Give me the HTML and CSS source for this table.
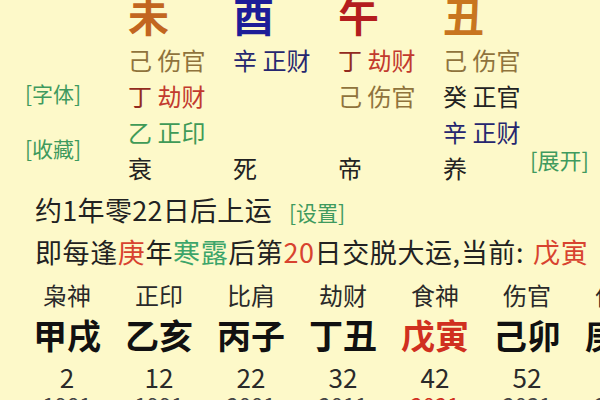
FILE: index.html
```html
<!DOCTYPE html>
<html lang="zh-CN">
<head>
<meta charset="utf-8">
<title>八字排盘</title>
<link rel="stylesheet" href="styles.css">
</head>
<body>
<main class="page">
  <section class="pillars">
    <div class="side">
      <span class="link">[字体]</span>
      <span class="link">[收藏]</span>
    </div>

    <div class="pillar">
      <div class="stem c-wei">未</div>
      <div class="hid"><span class="earth">己 伤官</span></div>
      <div class="hid"><span class="fire-d">丁</span> <span class="fire">劫财</span></div>
      <div class="hid"><span class="wood">乙 正印</span></div>
      <div class="hid stage">衰</div>
    </div>

    <div class="pillar">
      <div class="stem c-you">酉</div>
      <div class="hid"><span class="metal">辛 正财</span></div>
      <div class="hid"></div>
      <div class="hid"></div>
      <div class="hid stage">死</div>
    </div>

    <div class="pillar">
      <div class="stem c-wu">午</div>
      <div class="hid"><span class="fire-d">丁</span> <span class="fire">劫财</span></div>
      <div class="hid"><span class="earth">己 伤官</span></div>
      <div class="hid"></div>
      <div class="hid stage">帝</div>
    </div>

    <div class="pillar narrow">
      <div class="stem c-chou">丑</div>
      <div class="hid"><span class="earth">己 伤官</span></div>
      <div class="hid"><span class="water">癸 正官</span></div>
      <div class="hid"><span class="metal">辛 正财</span></div>
      <div class="hid stage">养</div>
    </div>

    <div class="expand"><span class="link">[展开]</span></div>
  </section>

  <p class="line first">约1年零22日后上运<span class="link small">[设置]</span></p>
  <p class="line second">即每逢<span class="hl-red">庚</span>年<span class="hl-green">寒露</span>后第<span class="hl-red">20</span>日交脱大运,当前:<span class="hl-red now">戊寅</span></p>

  <section class="dayun">
    <div class="dy"><span class="dy-god">枭神</span><span class="dy-gz">甲戌</span><span class="dy-age">2</span><span class="dy-year">1981</span></div>
    <div class="dy"><span class="dy-god">正印</span><span class="dy-gz">乙亥</span><span class="dy-age">12</span><span class="dy-year">1991</span></div>
    <div class="dy"><span class="dy-god">比肩</span><span class="dy-gz">丙子</span><span class="dy-age">22</span><span class="dy-year">2001</span></div>
    <div class="dy"><span class="dy-god">劫财</span><span class="dy-gz">丁丑</span><span class="dy-age">32</span><span class="dy-year">2011</span></div>
    <div class="dy"><span class="dy-god">食神</span><span class="dy-gz current">戊寅</span><span class="dy-age">42</span><span class="dy-year current-y">2021</span></div>
    <div class="dy"><span class="dy-god">伤官</span><span class="dy-gz">己卯</span><span class="dy-age">52</span><span class="dy-year">2031</span></div>
    <div class="dy"><span class="dy-god">偏财</span><span class="dy-gz">庚辰</span><span class="dy-age">62</span><span class="dy-year">2041</span></div>
  </section>
</main>
</body>
</html>
```

FILE: styles.css
```css
html, body {
  margin: 0;
  padding: 0;
  background: #fdf9c9;
  width: 600px;
  height: 400px;
  overflow: hidden;
}

.page {
  font-family: "Noto Sans CJK SC", "Noto Sans", sans-serif;
  color: #222;
  width: 600px;
}

/* ---------- four pillars ---------- */
.pillars {
  display: flex;
  padding-left: 25px;
  margin-top: -7px;
}

.side {
  width: 103px;
  flex: none;
  display: flex;
  flex-direction: column;
  align-items: flex-start;
  gap: 25px;
  padding-top: 85px;
  font-size: 21px;
  line-height: 30px;
}

.link {
  color: #3f9a5e;
}

.pillar {
  width: 105px;
  flex: none;
  display: flex;
  flex-direction: column;
}

.pillar.narrow {
  width: 87px;
}

.stem {
  font-size: 41px;
  line-height: 42px;
  height: 49px;
  font-weight: 700;
}

.c-wei { color: #c2661f; }
.c-you { color: #1d1d98; }
.c-wu { color: #b41d1d; }
.c-chou { color: #c8751f; }

.hid {
  font-size: 24px;
  line-height: 36px;
  height: 36px;
  white-space: nowrap;
}

.earth { color: #8f733c; }
.metal { color: #26266f; }
.fire-d { color: #922b1f; }
.fire { color: #c23a2e; }
.water { color: #222; }
.wood { color: #3f9a57; }
.stage { color: #222; }

.expand {
  align-self: flex-end;
  font-size: 22px;
  line-height: 30px;
  margin-bottom: 12px;
}

/* ---------- text lines ---------- */
.line {
  margin: 0;
  padding-left: 35px;
  font-size: 27px;
  line-height: 40px;
  white-space: nowrap;
  color: #222;
}

.line.first {
  margin-top: 4px;
  letter-spacing: 0.3px;
}

.line.second {
  letter-spacing: 0.6px;
}

.small {
  font-size: 21px;
  letter-spacing: 0;
  margin-left: 17px;
}

.now {
  margin-left: 9px;
}

.hl-red { color: #d8432f; }
.hl-green { color: #3ca56a; }

/* ---------- da yun ---------- */
.dayun {
  display: grid;
  grid-template-columns: repeat(7, 92px);
  padding-left: 21px;
  margin-top: 5px;
}

.dy {
  display: flex;
  flex-direction: column;
  align-items: center;
  text-align: center;
}

.dy-god {
  font-size: 24px;
  line-height: 36px;
  color: #2a2a2a;
}

.dy-gz {
  font-size: 34px;
  line-height: 44px;
  font-weight: 700;
  color: #111;
}

.dy-gz.current {
  color: #d0301f;
}

.dy-age {
  font-size: 26px;
  line-height: 40px;
  color: #2a2a2a;
}

.dy-year {
  font-size: 22px;
  line-height: 20px;
  margin-top: -3px;
  color: #444;
}

.current-y {
  color: #d0301f;
}
```
